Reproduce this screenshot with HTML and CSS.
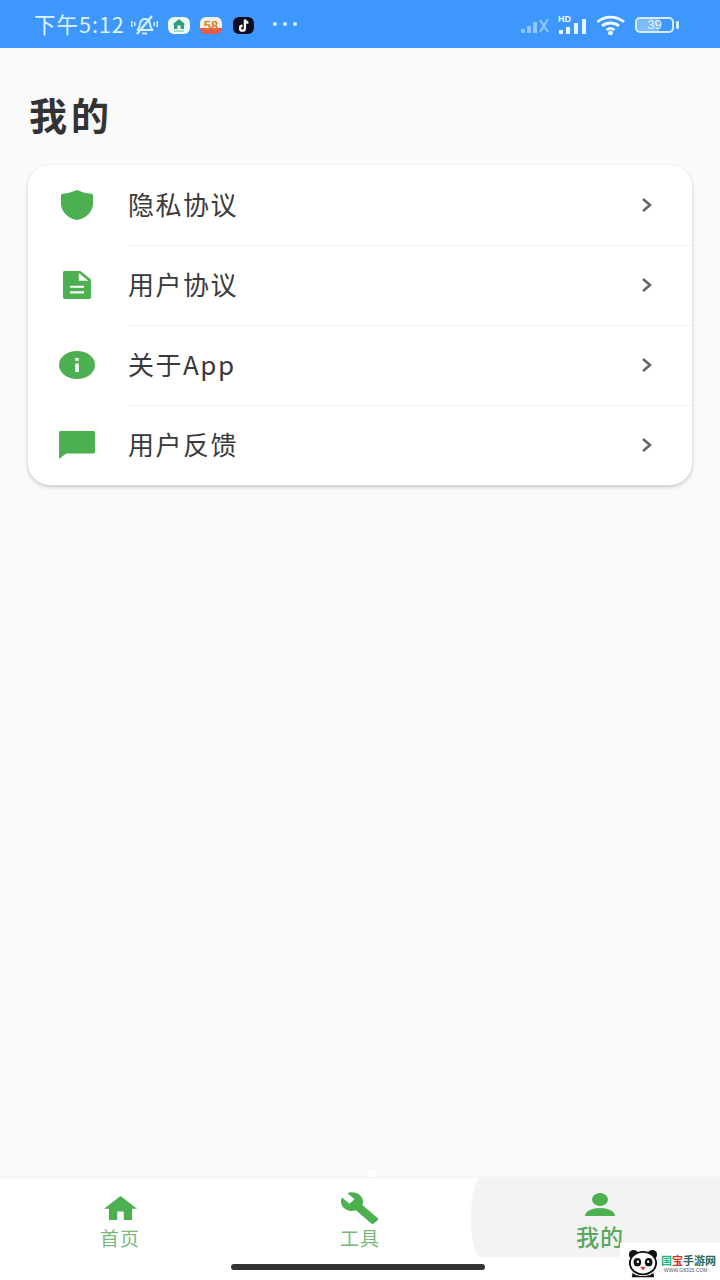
FILE: index.html
```html
<!DOCTYPE html>
<html lang="zh-CN">
<head>
  <meta charset="UTF-8" />
  <meta name="viewport" content="width=device-width, initial-scale=1.0"/>
  <title>我的</title>
  <link rel="stylesheet" href="styles.css">
</head>
<body>
  <div class="phone">

    <div class="status-bar">
      <div class="status-left">
        <span class="time">下午5:12</span>
        <svg class="bell" viewBox="0 0 27 20" fill="none" stroke="#d8f0ff" stroke-width="1.800">
          <path d="M6 15c2-1 2.500-3 3-6 .5-3 2.500-5 5-5s4.500 2 5 5c.5 3 1 5 3 6z"/>
          <path d="M11 18.500h5"/>
          <path d="M6 19L21 1" stroke-width="2.200"/>
          <path d="M1 6c-.5 2-.5 4 0 6M4 7c-.4 1-.4 2.500 0 4M23 7c.4 1 .4 2.500 0 4M26 6c.5 2 .5 4 0 6" stroke-width="1.500"/>
        </svg>
        <span class="app-icon app-home">
          <svg viewBox="0 0 22 16" width="22" height="16"><path d="M11 2l6.500 5.500H16V12H6V7.500H4.500z" fill="#2f9e7e"/><path d="M9.500 8.500h3V12h-3z" fill="#fff"/><path d="M6 14h10" stroke="#5cc0a0" stroke-width="1"/></svg>
        </span>
        <span class="app-icon app-58">58</span>
        <span class="app-icon app-tiktok">
          <svg viewBox="0 0 22 22" width="20" height="20"><path d="M12 5v9.500a2.700 2.700 0 1 1-2.700-2.700M12 5c.3 2 1.800 3.400 3.800 3.500" fill="none" stroke="#fff" stroke-width="2.600"/></svg>
        </span>
        <span class="more-dots"><i></i><i></i><i></i></span>
      </div>
      <div class="status-right">
        <svg class="signal-dim" viewBox="0 0 30 20" fill="#8fc6ff">
          <rect x="0" y="14" width="4" height="4"/><rect x="6" y="11" width="4" height="7"/><rect x="12" y="7" width="4" height="11"/>
          <path d="M19 5l8 12M27 4l-8 13" stroke="#8fc6ff" stroke-width="2.200"/>
        </svg>
        <span class="signal-hd">
          <b>HD</b>
          <svg viewBox="0 0 30 16" fill="#e6f4ff">
            <rect x="1" y="11" width="4" height="4"/><rect x="8" y="8" width="4" height="7"/><rect x="16" y="4" width="4" height="11"/><rect x="24" y="0" width="4" height="15"/>
          </svg>
        </span>
        <svg class="wifi" viewBox="0 0 30 20" fill="none" stroke="#eef8ff" stroke-width="2.800">
          <path d="M1.500 7C9 .5 20 .5 28 7"/>
          <path d="M6 11c5-4 12-4 17 0"/>
          <path d="M10.500 15c2.500-2 5.500-2 8 0"/>
          <circle cx="14.500" cy="18" r="1" fill="#eef8ff"/>
        </svg>
        <span class="battery">39</span>
      </div>
    </div>

    <main class="content">
      <h1 class="page-title">我的</h1>

      <div class="card">
        <div class="row">
          <span class="row-icon">
            <svg width="32" height="30" viewBox="3 1 18 22" preserveAspectRatio="none"><path d="M12 1c-2.500 1.500-5 2.300-8 2.700-.6.100-1 .5-1 1.100V11c0 5.550 3.840 10.740 9 12 5.160-1.260 9-6.450 9-12V4.800c0-.6-.4-1-1-1.100-3-.4-5.500-1.200-8-2.700z"/></svg>
          </span>
          <span class="row-label">隐私协议</span>
          <svg class="chevron" width="14" height="18" viewBox="0 0 14 18"><path d="M3 3l7 6-7 6"/></svg>
        </div>
        <div class="row">
          <span class="row-icon">
            <svg width="28" height="28" viewBox="4 2 16 20" preserveAspectRatio="none"><path d="M14 2H5c-.6 0-1 .4-1 1v18c0 .6.400 1 1 1h14c.6 0 1-.4 1-1V8l-6-6zm2 16H8v-1.500h8V18zm0-4H8v-1.500h8V14zm-3-5V3.500L18.500 9H13z"/></svg>
          </span>
          <span class="row-label">用户协议</span>
          <svg class="chevron" width="14" height="18" viewBox="0 0 14 18"><path d="M3 3l7 6-7 6"/></svg>
        </div>
        <div class="row">
          <span class="row-icon">
            <svg width="36" height="28" viewBox="2 2 20 20" preserveAspectRatio="none"><path d="M12 2a10 10 0 1 0 0 20 10 10 0 0 0 0-20zm1 15h-2v-6h2v6zm0-8h-2V7h2v2z"/></svg>
          </span>
          <span class="row-label">关于App</span>
          <svg class="chevron" width="14" height="18" viewBox="0 0 14 18"><path d="M3 3l7 6-7 6"/></svg>
        </div>
        <div class="row">
          <span class="row-icon">
            <svg width="36" height="28" viewBox="2 2 20 20" preserveAspectRatio="none"><path d="M21 2H3c-.6 0-1 .4-1 1v19l4-4h15c.6 0 1-.4 1-1V3c0-.6-.4-1-1-1z"/></svg>
          </span>
          <span class="row-label">用户反馈</span>
          <svg class="chevron" width="14" height="18" viewBox="0 0 14 18"><path d="M3 3l7 6-7 6"/></svg>
        </div>
      </div>
    </main>

    <nav class="tab-bar">
      <div class="tab">
        <span class="tab-icon">
          <svg width="33" height="24" viewBox="2 3 20 17" preserveAspectRatio="none"><path d="M10 20v-6h4v6h5v-8h3L12 3 2 12h3v8z"/></svg>
        </span>
        <span class="tab-label">首页</span>
      </div>
      <div class="tab">
        <span class="tab-icon">
          <svg width="39" height="32" viewBox="1 1 23 22" preserveAspectRatio="none"><path d="M22.700 19l-9.100-9.100c.9-2.300.4-5-1.500-6.900-2-2-5-2.400-7.400-1.300L9 6 6 9 1.600 4.700C.4 7.100.9 10.100 2.900 12.100c1.900 1.900 4.600 2.400 6.900 1.500l9.100 9.100c.4.400 1 .4 1.400 0l2.300-2.300c.5-.4.500-1.100.1-1.400z"/></svg>
        </span>
        <span class="tab-label">工具</span>
      </div>
      <div class="tab tab-active">
        <span class="tab-icon">
          <svg width="30" height="23" viewBox="0 0 30 23"><ellipse cx="15" cy="6.500" rx="8" ry="6.500"/><path d="M0 23c0-5 7-8 15-8s15 3 15 8z"/></svg>
        </span>
        <span class="tab-label">我的</span>
      </div>
    </nav>

    <span class="page-dot"></span>
    <div class="home-bar"></div>

    <div class="watermark">
      <svg width="30" height="30" viewBox="0 0 32 32">
        <circle cx="6" cy="6" r="5" fill="#111"/><circle cx="26" cy="6" r="5" fill="#111"/>
        <ellipse cx="16" cy="15" rx="14" ry="12" fill="#fff" stroke="#111" stroke-width="2"/>
        <ellipse cx="10" cy="14" rx="4" ry="4.500" fill="#111"/><ellipse cx="22" cy="14" rx="4" ry="4.500" fill="#111"/>
        <circle cx="10.500" cy="13.500" r="1.300" fill="#fff"/><circle cx="21.500" cy="13.500" r="1.300" fill="#fff"/>
        <path d="M13 19h6l-3 4z" fill="#d33"/>
        <path d="M5 25c3 5 19 5 22 0l1 5H4z" fill="#111"/>
      </svg>
      <div class="wm-text">
        <div class="wm-name"><span class="wm-green">国</span><span class="wm-red">宝</span>手游网</div>
        <div class="wm-url">· WWW.G8315.COM ·</div>
      </div>
    </div>

  </div>
</body>
</html>
```

FILE: styles.css
```css
* {
  box-sizing: border-box;
}

body {
  margin: 0;
  background: #fafafa;
  font-family: "Noto Sans CJK SC", "Noto Sans", sans-serif;
}

.phone {
  position: relative;
  width: 720px;
  height: 1280px;
  display: flex;
  flex-direction: column;
  overflow: hidden;
  background: #fafafa;
}

/* status bar */
.status-bar {
  height: 48px;
  flex-shrink: 0;
  display: flex;
  align-items: center;
  justify-content: space-between;
  padding: 2px 46px 0 34px;
  background: #3d97fd;
}

.status-left,
.status-right {
  display: flex;
  align-items: center;
}

.time {
  width: 97px;
  margin-top: -2px;
  font-size: 21.500px;
  line-height: 24px;
  letter-spacing: 1px;
  color: #dff3ff;
  white-space: nowrap;
}

.bell {
  width: 27px;
  height: 20px;
  margin-right: 10px;
}

.app-icon {
  width: 22px;
  height: 17px;
  margin-right: 10px;
  display: flex;
  align-items: center;
  justify-content: center;
  border-radius: 6px;
  background: #eef8f6;
}

.app-58 {
  font-family: "Liberation Sans", sans-serif;
  font-size: 13px;
  font-weight: bold;
  line-height: 1;
  color: #d9822b;
  background: linear-gradient(#f4f1ea 65%, #e8574a 65%);
}

.app-tiktok {
  width: 21px;
  margin-left: 1px;
  margin-right: 19px;
  background: #0b0b22;
}

.more-dots {
  display: flex;
  gap: 6px;
  margin-top: -2px;
}

.more-dots i {
  width: 4px;
  height: 4px;
  border-radius: 50%;
  background: #dff3ff;
}

.signal-dim {
  width: 30px;
  height: 20px;
  margin-right: 7px;
}

.signal-hd {
  position: relative;
  display: block;
  width: 30px;
  height: 16px;
  margin-right: 8px;
  margin-top: 3px;
}

.signal-hd svg {
  width: 30px;
  height: 16px;
  display: block;
}

.signal-hd b {
  position: absolute;
  left: 0;
  top: -4px;
  font-family: "Liberation Sans", sans-serif;
  font-size: 9px;
  line-height: 9px;
  color: #eef8ff;
}

.wifi {
  width: 30px;
  height: 20px;
  margin-right: 9px;
}

.battery {
  position: relative;
  width: 39px;
  height: 16px;
  display: flex;
  align-items: center;
  justify-content: center;
  border: 2px solid #d5eeff;
  border-radius: 5px;
  background: linear-gradient(90deg, #7dbcfa 62%, transparent 62%);
  background-clip: padding-box;
  font-family: "Liberation Sans", sans-serif;
  font-size: 13px;
  line-height: 12px;
  color: #e6f4ff;
}

.battery::after {
  content: "";
  position: absolute;
  right: -7px;
  top: 2px;
  width: 3px;
  height: 8px;
  border-radius: 1px;
  background: #d5eeff;
}

/* page content */
.content {
  flex: 1;
  padding: 0 28px;
}

.page-title {
  margin: 42px 0 0 1px;
  height: 75px;
  font-size: 38px;
  line-height: 48px;
  font-weight: 700;
  letter-spacing: 4px;
  color: #333;
}

.card {
  background: #fff;
  border-radius: 22px;
  box-shadow: 0 2px 4px rgba(0,0,0,0.2);
}

.row {
  height: 80px;
  display: flex;
  align-items: center;
  position: relative;
}

.row + .row::before {
  content: "";
  position: absolute;
  left: 100px;
  right: 0;
  top: 0;
  height: 1px;
  background: #f3f3f3;
}

.row-icon {
  width: 100px;
  padding-left: 31px;
  padding-right: 33px;
  display: flex;
  justify-content: center;
  flex-shrink: 0;
}

.row-icon svg {
  display: block;
  flex-shrink: 0;
  fill: #4caf50;
}

.row-label {
  flex: 1;
  font-size: 26px;
  line-height: 32px;
  margin-top: -2px;
  letter-spacing: 1.500px;
  color: #3a3a3a;
}

.chevron {
  margin-right: 38px;
  fill: none;
  stroke: #666;
  stroke-width: 2.6;
}

/* bottom tabs */
.tab-bar {
  height: 102px;
  flex-shrink: 0;
  display: grid;
  grid-template-columns: repeat(3, 1fr);
  background: #fff;
  box-shadow: 0 -1px 1px rgba(0,0,0,0.03);
}

.tab {
  position: relative;
  height: 79px;
  padding-top: 14px;
  display: flex;
  flex-direction: column;
  align-items: center;
}

.tab-icon {
  position: relative;
  height: 32px;
  margin-bottom: 2px;
  display: flex;
  align-items: center;
}

.tab-icon svg {
  display: block;
  fill: #4caf50;
}

.tab-label {
  position: relative;
  font-size: 19px;
  line-height: 24px;
  letter-spacing: 1px;
  color: #78b87b;
}

.tab-active::before {
  content: "";
  position: absolute;
  left: -9px;
  right: 0;
  top: 0;
  bottom: 0;
  background: #f3f3f3;
  border-radius: 9px 0 0 9px / 50%;
}

.tab-active .tab-icon {
  align-items: flex-start;
  padding-top: 1px;
  margin-bottom: 0;
}

.tab-active .tab-label {
  font-size: 23px;
  font-weight: 500;
  letter-spacing: 1px;
  color: #5aa85e;
}

.page-dot {
  position: absolute;
  left: 367px;
  top: 1169px;
  width: 10px;
  height: 8px;
  border-radius: 50%;
  background: #fff;
}

.home-bar {
  position: absolute;
  left: 231px;
  bottom: 10px;
  width: 254px;
  height: 6px;
  border-radius: 3px;
  background: #333;
}

/* watermark */
.watermark {
  position: absolute;
  right: 0;
  bottom: 0;
  width: 100px;
  height: 37px;
  display: flex;
  align-items: center;
  gap: 3px;
  padding-left: 8px;
  padding-top: 4px;
  background: #fff;
}

.watermark svg {
  flex-shrink: 0;
}

.wm-name {
  font-size: 11px;
  font-weight: 700;
  line-height: 13px;
  color: #2b6b5a;
  white-space: nowrap;
}

.wm-green {
  color: #1bb57a;
}

.wm-red {
  color: #d9342b;
}

.wm-url {
  font-family: "Liberation Sans", sans-serif;
  font-size: 5px;
  line-height: 7px;
  color: #555;
  white-space: nowrap;
}
```
